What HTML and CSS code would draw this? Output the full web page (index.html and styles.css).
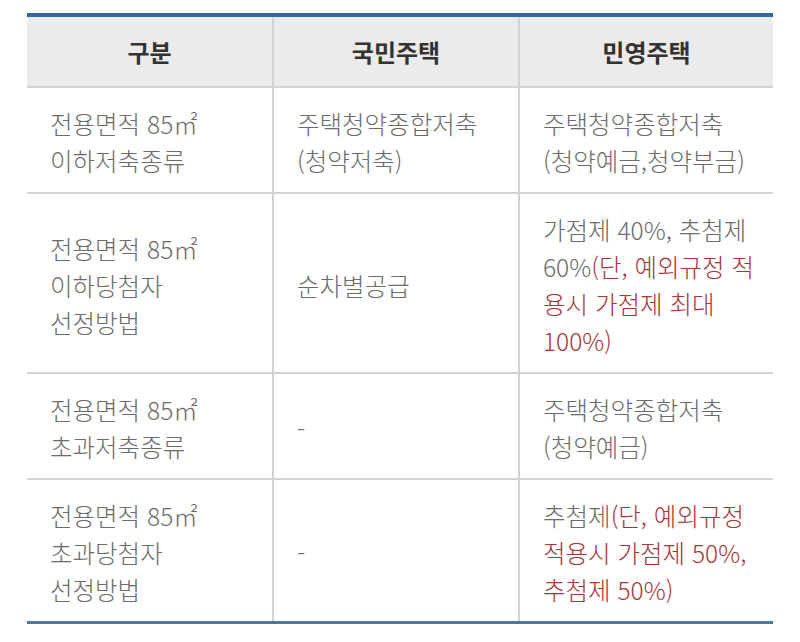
FILE: index.html
```html
<!DOCTYPE html>
<html lang="ko">
<head>
<meta charset="utf-8">
<link rel="stylesheet" href="styles.css">
</head>
<body>
<table class="tbl">
  <colgroup>
    <col class="c1"><col class="c2"><col class="c3">
  </colgroup>
  <thead>
    <tr><th>구분</th><th>국민주택</th><th>민영주택</th></tr>
  </thead>
  <tbody>
    <tr>
      <td>전용면적 85㎡<br>이하저축종류</td>
      <td>주택청약종합저축<br>(청약저축)</td>
      <td>주택청약종합저축<br>(청약예금,청약부금)</td>
    </tr>
    <tr>
      <td>전용면적 85㎡<br>이하당첨자<br>선정방법</td>
      <td>순차별공급</td>
      <td>가점제 40%, 추첨제<br>60%<span class="red">(단, 예외규정 적<br>용시 가점제 최대<br>100%)</span></td>
    </tr>
    <tr>
      <td>전용면적 85㎡<br>초과저축종류</td>
      <td>-</td>
      <td>주택청약종합저축<br>(청약예금)</td>
    </tr>
    <tr>
      <td>전용면적 85㎡<br>초과당첨자<br>선정방법</td>
      <td>-</td>
      <td>추첨제<span class="red">(단, 예외규정<br>적용시 가점제 50%,<br>추첨제 50%)</span></td>
    </tr>
  </tbody>
</table>
</body>
</html>
```

FILE: styles.css
```css
html, body {
  margin: 0;
  padding: 0;
  background: #ffffff;
}
body {
  font-family: "Noto Sans CJK KR", "Noto Sans", sans-serif;
}
.tbl {
  margin: 13px 0 0 27px;
  width: 746px;
  border-collapse: collapse;
  table-layout: fixed;
  border-top: 4px solid #2b6a9e;
  border-bottom: 3px solid #4a7b9b;
}
.c1 { width: 246px; }
.c2 { width: 246px; }
.c3 { width: 254px; }
.tbl th {
  background: #ebebeb;
  color: #333333;
  font-weight: 700;
  font-size: 24px;
  line-height: 37px;
  padding: 16px 0 16px 0;
  text-align: center;
  border-bottom: 2px solid #d2d2d2;
  border-left: 2px solid #d2d2d2;
}
.tbl th:first-child, .tbl td:first-child {
  border-left: none;
}
.tbl td {
  color: #6b6b6b;
  font-weight: 300;
  font-size: 24.5px;
  line-height: 37px;
  padding: 17px 8px 13px 23px;
  vertical-align: middle;
  text-align: left;
  border-top: 2px solid #d2d2d2;
  border-left: 2px solid #d2d2d2;
  white-space: nowrap;
}
.tbl tbody tr:first-child td {
  border-top: none;
}
.red {
  color: #a8353a;
}
```
